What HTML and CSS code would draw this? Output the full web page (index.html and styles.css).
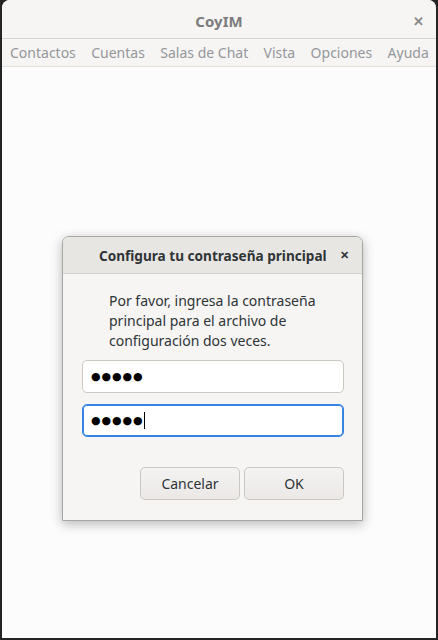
FILE: index.html
```html
<!DOCTYPE html>
<html lang="es">
<head>
  <meta charset="UTF-8">
  <title>CoyIM</title>
  <link rel="stylesheet" href="styles.css">
</head>
<body>

<div class="ventana">
  <div class="barra-titulo">
    <span class="titulo">CoyIM</span>
    <span class="cerrar">&#x2715;</span>
  </div>

  <div class="menu">
    <span>Contactos</span>
    <span>Cuentas</span>
    <span>Salas de Chat</span>
    <span>Vista</span>
    <span>Opciones</span>
    <span>Ayuda</span>
  </div>

  <div class="contenido">
    <div class="dialogo">
      <div class="dialogo-cabecera">
        <span class="dialogo-titulo">Configura tu contraseña principal</span>
        <span class="dialogo-cerrar">&#x2715;</span>
      </div>
      <div class="dialogo-cuerpo">
        <p class="mensaje">Por favor, ingresa la contraseña principal para el archivo de configuración dos veces.</p>
        <div class="entrada">&#x25CF;&#x25CF;&#x25CF;&#x25CF;&#x25CF;</div>
        <div class="entrada activa">&#x25CF;&#x25CF;&#x25CF;&#x25CF;&#x25CF;<span class="cursor"></span></div>
        <div class="botones">
          <button class="boton">Cancelar</button>
          <button class="boton">OK</button>
        </div>
      </div>
    </div>
  </div>
</div>

</body>
</html>
```

FILE: styles.css
```css
body {
  margin: 0;
  width: 438px;
  height: 640px;
  background: #242424;
  font-family: "Noto Sans", sans-serif;
  overflow: hidden;
}

.ventana {
  margin: 0 2px;
  height: 638px;
  background: #fcfcfc;
  border-radius: 8px 8px 0 0;
  display: flex;
  flex-direction: column;
  overflow: hidden;
}

.barra-titulo {
  height: 35px;
  padding-top: 3px;
  background: #f6f5f4;
  border-bottom: 1px solid #d8d4d0;
  display: flex;
  align-items: center;
  justify-content: center;
  position: relative;
}

.titulo {
  font-size: 15px;
  font-weight: bold;
  color: #7c7c7c;
}

.cerrar {
  position: absolute;
  right: 12px;
  top: 12px;
  font-size: 13px;
  font-weight: bold;
  color: #8a8a8a;
}

.menu {
  height: 27px;
  background: #f6f5f4;
  border-bottom: 1px solid #e2dfdb;
  display: flex;
  align-items: center;
  gap: 15.4px;
  padding-left: 8px;
  font-size: 14px;
  white-space: nowrap;
  color: #94979a;
}

.contenido {
  flex: 1;
  padding: 169px 0 0 60px;
}

.dialogo {
  width: 299px;
  border: 1px solid #a8a6a3;
  border-radius: 7px 7px 0 0;
  box-shadow: 0 3px 12px rgba(0, 0, 0, 0.28);
  background: #f6f5f4;
  overflow: hidden;
}

.dialogo-cabecera {
  height: 36px;
  background: #e8e6e3;
  border-bottom: 1px solid #d4d0cc;
  display: flex;
  align-items: center;
  padding-left: 36px;
  position: relative;
}

.dialogo-titulo {
  font-size: 13.6px;
  font-weight: bold;
  color: #2e3436;
}

.dialogo-cerrar {
  position: absolute;
  right: 13px;
  top: 10px;
  font-size: 11px;
  font-weight: bold;
  color: #2e3436;
}

.dialogo-cuerpo {
  padding: 17px 18px 20px 19px;
}

.mensaje {
  margin: 0 0 9px 27px;
  font-size: 14px;
  line-height: 20px;
  color: #2e3436;
}

.entrada {
  height: 31px;
  background: #ffffff;
  border: 1px solid #cdc7c2;
  border-radius: 5px;
  margin-bottom: 11px;
  display: flex;
  align-items: center;
  padding-left: 8px;
  font-family: "DejaVu Sans", sans-serif;
  font-size: 11px;
  letter-spacing: 0.9px;
  color: #000;
}

.entrada.activa {
  border-color: #3584e4;
  box-shadow: inset 0 0 0 1px #3584e4;
}

.cursor {
  display: inline-block;
  width: 1px;
  height: 17px;
  background: #000;
  margin-left: 0;
}

.botones {
  display: flex;
  justify-content: flex-end;
  gap: 4px;
  margin-top: 30px;
}

.boton {
  width: 100px;
  height: 33px;
  border: 1px solid #cdc7c2;
  border-radius: 5px;
  background: linear-gradient(#f4f3f2, #ebe8e6);
  font-family: "Noto Sans", sans-serif;
  font-size: 14px;
  color: #2e3436;
}
```
